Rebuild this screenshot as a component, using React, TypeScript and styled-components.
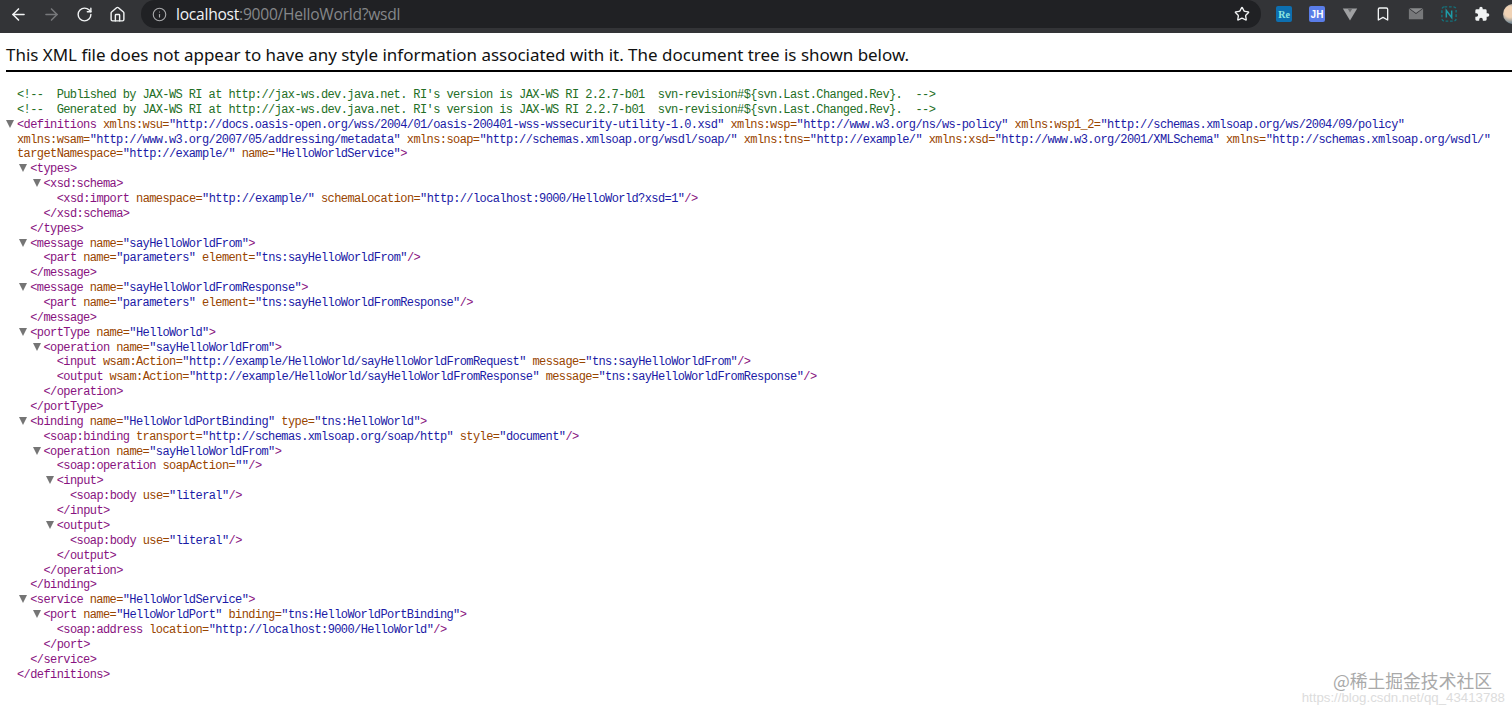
import React from 'react';
import styled, { createGlobalStyle } from 'styled-components';
import { ArrowLeft, ArrowRight, RotateCw, Home, Info, Star, Bookmark } from 'lucide-react';

const GlobalStyle = createGlobalStyle`
  html, body {
    margin: 0;
    padding: 0;
    background: #ffffff;
  }
  body {
    width: 1512px;
    height: 714px;
    overflow: hidden;
    position: relative;
  }
`;

const Toolbar = styled.header`
  height: 33px;
  background: #333437;
  display: flex;
  align-items: flex-start;
`;

const NavGroup = styled.nav`
  width: 141px;
  height: 28px;
  display: flex;
  align-items: center;
  padding-left: 8px;
  gap: 13px;
  box-sizing: border-box;
`;

const NavButton = styled.span<{ $dim?: boolean }>`
  display: flex;
  width: 20px;
  justify-content: center;
  color: ${p => (p.$dim ? '#77787b' : '#f1f3f4')};
`;

const Omnibox = styled.div`
  width: 1120px;
  height: 28px;
  background: #202124;
  border-radius: 14px;
  display: flex;
  align-items: center;
  padding: 0 11px 0 11px;
  box-sizing: border-box;
  font: 15.6px 'Open Sans', 'Noto Sans', sans-serif;
  letter-spacing: -0.25px;
  color: #85878a;
`;

const Host = styled.span`
  color: #f1f3f4;
  margin-left: 9px;
`;

const Path = styled.span`
  flex: 1;
`;

const Extensions = styled.div`
  flex: 1;
  height: 28px;
  display: flex;
  align-items: center;
  padding-left: 15px;
  gap: 17px;
  overflow: hidden;
`;

const ExtSlot = styled.span`
  width: 16px;
  height: 18px;
  flex: none;
  display: flex;
  align-items: center;
  justify-content: center;
`;

const BadgeIcon = styled.span<{ $bg: string; $fg: string; $serif?: boolean }>`
  width: 16px;
  height: 16px;
  border-radius: 2px;
  background: ${p => p.$bg};
  color: ${p => p.$fg};
  font: bold 10px ${p => (p.$serif ? "'Liberation Serif', serif" : "'Liberation Sans', sans-serif")};
  display: flex;
  align-items: center;
  justify-content: center;
`;

const Avatar = styled.span`
  width: 20px;
  height: 20px;
  flex: none;
  margin-left: -4px;
  border-radius: 50%;
  background: radial-gradient(circle at 35% 40%, #f0d2b4 0 30%, #7f8f98 60%, #4c4f52 100%);
`;

const Warning = styled.div`
  margin: 11px 0 0 6px;
  padding-bottom: 5px;
  border-bottom: 2px solid #000000;
  font: 16.97px/21px 'Noto Sans', 'Open Sans', sans-serif;
  color: #111111;
`;

const Tree = styled.main`
  margin-top: 16px;
  font-family: 'Liberation Mono', 'DejaVu Sans Mono', monospace;
  font-size: 12px;
  letter-spacing: -0.595px;
  line-height: 14.87px;
`;

const Row = styled.div<{ $depth: number }>`
  height: 14.87px;
  white-space: pre;
  padding-left: ${p => 17 + p.$depth * 13.25}px;
`;

const Arrow = styled.span`
  display: inline-block;
  width: 0;
  height: 0;
  margin-left: -11px;
  margin-right: 3px;
  border-left: 4px solid transparent;
  border-right: 4px solid transparent;
  border-top: 8px solid #757575;
`;

const Comment = styled.span`
  color: #236e25;
`;

const Tag = styled.span`
  color: #881280;
`;

const AttrName = styled.span`
  color: #994500;
`;

const AttrValue = styled.span`
  color: #1a1aa6;
`;

const Watermark = styled.aside`
  position: absolute;
  right: 7px;
  bottom: 9px;
  text-align: right;
  pointer-events: none;
`;

const WatermarkTitle = styled.div`
  font: 17.8px/20px 'Noto Sans CJK SC', 'Noto Sans', sans-serif;
  color: #a9a9a9;
  margin-right: 13px;
`;

const WatermarkLink = styled.div`
  font: 13.25px/15px 'Liberation Sans', sans-serif;
  color: #dcdcdc;
`;

type Line = { d: number; open?: boolean; text: string; comment?: boolean };

const VERSION_NOTE = "by JAX-WS RI at http://jax-ws.dev.java.net. RI's version is JAX-WS RI 2.2.7-b01  svn-revision#${svn.Last.Changed.Rev}.  -->";

const LINES: Line[] = [
  { d: 0, comment: true, text: `<!--  Published ${VERSION_NOTE}` },
  { d: 0, comment: true, text: `<!--  Generated ${VERSION_NOTE}` },
  { d: 0, open: true, text: '<definitions xmlns:wsu="http://docs.oasis-open.org/wss/2004/01/oasis-200401-wss-wssecurity-utility-1.0.xsd" xmlns:wsp="http://www.w3.org/ns/ws-policy" xmlns:wsp1_2="http://schemas.xmlsoap.org/ws/2004/09/policy"' },
  { d: 0, text: 'xmlns:wsam="http://www.w3.org/2007/05/addressing/metadata" xmlns:soap="http://schemas.xmlsoap.org/wsdl/soap/" xmlns:tns="http://example/" xmlns:xsd="http://www.w3.org/2001/XMLSchema" xmlns="http://schemas.xmlsoap.org/wsdl/"' },
  { d: 0, text: 'targetNamespace="http://example/" name="HelloWorldService">' },
  { d: 1, open: true, text: '<types>' },
  { d: 2, open: true, text: '<xsd:schema>' },
  { d: 3, text: '<xsd:import namespace="http://example/" schemaLocation="http://localhost:9000/HelloWorld?xsd=1"/>' },
  { d: 2, text: '</xsd:schema>' },
  { d: 1, text: '</types>' },
  { d: 1, open: true, text: '<message name="sayHelloWorldFrom">' },
  { d: 2, text: '<part name="parameters" element="tns:sayHelloWorldFrom"/>' },
  { d: 1, text: '</message>' },
  { d: 1, open: true, text: '<message name="sayHelloWorldFromResponse">' },
  { d: 2, text: '<part name="parameters" element="tns:sayHelloWorldFromResponse"/>' },
  { d: 1, text: '</message>' },
  { d: 1, open: true, text: '<portType name="HelloWorld">' },
  { d: 2, open: true, text: '<operation name="sayHelloWorldFrom">' },
  { d: 3, text: '<input wsam:Action="http://example/HelloWorld/sayHelloWorldFromRequest" message="tns:sayHelloWorldFrom"/>' },
  { d: 3, text: '<output wsam:Action="http://example/HelloWorld/sayHelloWorldFromResponse" message="tns:sayHelloWorldFromResponse"/>' },
  { d: 2, text: '</operation>' },
  { d: 1, text: '</portType>' },
  { d: 1, open: true, text: '<binding name="HelloWorldPortBinding" type="tns:HelloWorld">' },
  { d: 2, text: '<soap:binding transport="http://schemas.xmlsoap.org/soap/http" style="document"/>' },
  { d: 2, open: true, text: '<operation name="sayHelloWorldFrom">' },
  { d: 3, text: '<soap:operation soapAction=""/>' },
  { d: 3, open: true, text: '<input>' },
  { d: 4, text: '<soap:body use="literal"/>' },
  { d: 3, text: '</input>' },
  { d: 3, open: true, text: '<output>' },
  { d: 4, text: '<soap:body use="literal"/>' },
  { d: 3, text: '</output>' },
  { d: 2, text: '</operation>' },
  { d: 1, text: '</binding>' },
  { d: 1, open: true, text: '<service name="HelloWorldService">' },
  { d: 2, open: true, text: '<port name="HelloWorldPort" binding="tns:HelloWorldPortBinding">' },
  { d: 3, text: '<soap:address location="http://localhost:9000/HelloWorld"/>' },
  { d: 2, text: '</port>' },
  { d: 1, text: '</service>' },
  { d: 0, text: '</definitions>' },
];

// split one line of xml into coloured pieces
const colourise = (text: string) =>
  text.split(/(<\/?[\w:]+|\/?>|[\w:]+=|"[^"]*")/).map((part, i) => {
    if (!part) return null;
    if (part.startsWith('"')) return <AttrValue key={i}>{part}</AttrValue>;
    if (part.endsWith('=')) return <AttrName key={i}>{part}</AttrName>;
    if (part.startsWith('<') || part.endsWith('>')) return <Tag key={i}>{part}</Tag>;
    return part;
  });

const VueMark = () => (
  <svg width="20" height="18" viewBox="0 0 20 18">
    <path d="M1 2h18L10 17z" fill="#a0a1a3" />
    <path d="M7 2h6l-3 5z" fill="#6a6b6d" />
  </svg>
);

const MailMark = () => (
  <svg width="18" height="16" viewBox="0 0 18 16">
    <path d="M1 2l8 6 8-6v12H1z" fill="#77787a" />
    <path d="M1.5 1.5h15L9 7z" fill="#8a8b8d" />
  </svg>
);

const NotionMark = () => (
  <svg width="18" height="18" viewBox="0 0 18 18">
    <rect x="1" y="1" width="16" height="16" rx="3" fill="none" stroke="#14727c" strokeWidth="1.6" strokeDasharray="3 2" />
    <path d="M6 13V5l6 8V5" fill="none" stroke="#1f9aa6" strokeWidth="1.7" />
  </svg>
);

const PuzzleMark = () => (
  <svg width="16" height="16" viewBox="0 0 24 24">
    <path
      fill="#f1f3f4"
      d="M20.5 11H19V7a2 2 0 0 0-2-2h-4V3.5a2.5 2.5 0 0 0-5 0V5H4a2 2 0 0 0-2 2v3.8h1.5a2.7 2.7 0 0 1 0 5.4H2V20a2 2 0 0 0 2 2h3.8v-1.5a2.7 2.7 0 0 1 5.4 0V22H17a2 2 0 0 0 2-2v-4h1.5a2.5 2.5 0 0 0 0-5z"
    />
  </svg>
);

const App: React.FC = () => (
  <>
    <GlobalStyle />
    <Toolbar>
      <NavGroup>
        <NavButton><ArrowLeft size={19} strokeWidth={2} /></NavButton>
        <NavButton $dim><ArrowRight size={19} strokeWidth={2} /></NavButton>
        <NavButton><RotateCw size={17} strokeWidth={2} /></NavButton>
        <NavButton><Home size={17} strokeWidth={2} /></NavButton>
      </NavGroup>
      <Omnibox>
        <Info size={15} strokeWidth={1.8} color="#a8a9ab" />
        <Host>localhost</Host>
        <Path>:9000/HelloWorld?wsdl</Path>
        <Star size={16} strokeWidth={2} color="#f1f3f4" />
      </Omnibox>
      <Extensions>
        <ExtSlot><BadgeIcon $bg="#0d6fb0" $fg="#8fe8e0" $serif>Re</BadgeIcon></ExtSlot>
        <ExtSlot><BadgeIcon $bg="#5a7de8" $fg="#ffffff">JH</BadgeIcon></ExtSlot>
        <ExtSlot><VueMark /></ExtSlot>
        <ExtSlot><Bookmark size={18} strokeWidth={2} color="#f1f3f4" /></ExtSlot>
        <ExtSlot><MailMark /></ExtSlot>
        <ExtSlot><NotionMark /></ExtSlot>
        <ExtSlot><PuzzleMark /></ExtSlot>
        <Avatar />
      </Extensions>
    </Toolbar>
    <Warning>This XML file does not appear to have any style information associated with it. The document tree is shown below.</Warning>
    <Tree>
      {LINES.map((line, i) => (
        <Row key={i} $depth={line.d}>
          {line.open && <Arrow />}
          {line.comment ? <Comment>{line.text}</Comment> : colourise(line.text)}
        </Row>
      ))}
    </Tree>
    <Watermark>
      <WatermarkTitle>@稀土掘金技术社区</WatermarkTitle>
      <WatermarkLink>https://blog.csdn.net/qq_43413788</WatermarkLink>
    </Watermark>
  </>
);

export default App;
